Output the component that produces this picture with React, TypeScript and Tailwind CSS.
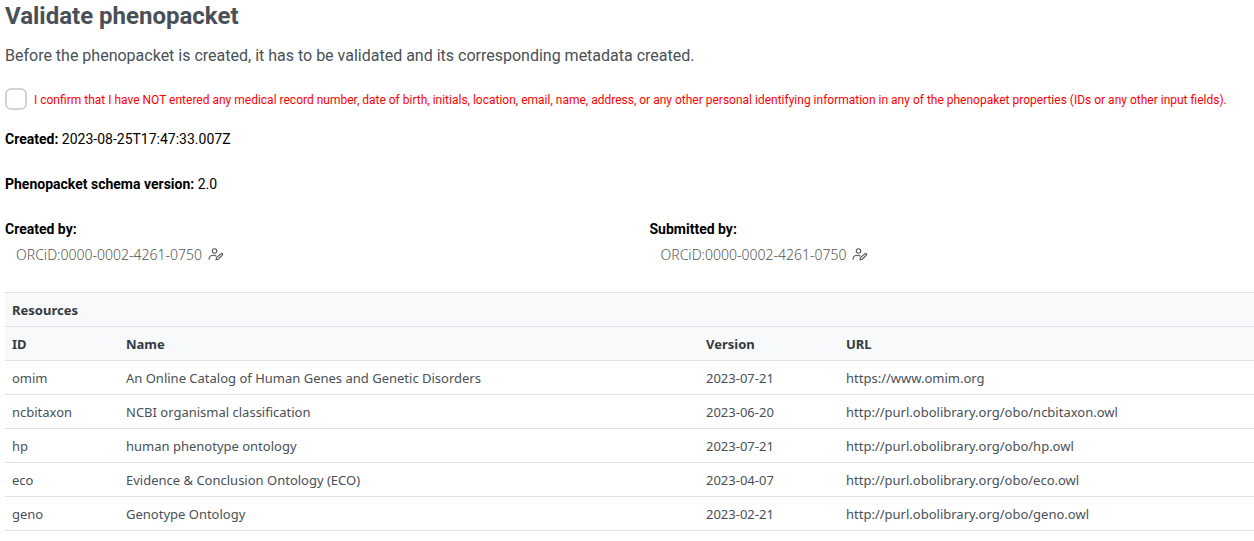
import React from "react";

const resources = [
  ["omim", "An Online Catalog of Human Genes and Genetic Disorders", "2023-07-21", "https://www.omim.org"],
  ["ncbitaxon", "NCBI organismal classification", "2023-06-20", "http://purl.obolibrary.org/obo/ncbitaxon.owl"],
  ["hp", "human phenotype ontology", "2023-07-21", "http://purl.obolibrary.org/obo/hp.owl"],
  ["eco", "Evidence & Conclusion Ontology (ECO)", "2023-04-07", "http://purl.obolibrary.org/obo/eco.owl"],
  ["geno", "Genotype Ontology", "2023-02-21", "http://purl.obolibrary.org/obo/geno.owl"],
];

function UserEditIcon() {
  return (
    <svg aria-hidden="true" className="h-4 w-4" viewBox="0 0 16 16" fill="none" stroke="currentColor" strokeWidth="1.1" strokeLinecap="round" strokeLinejoin="round">
      <circle cx="6.5" cy="4" r="2.2" />
      <path d="M1 12.2c.2-2.6 1.9-4 4.3-4 1.2 0 2.1.3 2.8.8" />
      <path d="M8 12.8l.5-2.2 4.6-4c.9-.7 2.1.5 1.3 1.4l-4.3 4.3z" />
    </svg>
  );
}

function Person({ title }: { title: string }) {
  return (
    <section>
      <h2 className="text-sm leading-5 font-bold">{title}</h2>
      <button type="button" className="mt-1 flex items-center gap-[6px] px-[11px] font-['Noto_Sans',sans-serif] text-sm leading-6 font-light text-[#555555]">
        <span>ORCiD:0000-0002-4261-0750</span>
        <UserEditIcon />
      </button>
    </section>
  );
}

export default function App() {
  return (
    <main className="bg-white pl-[5px] font-[Roboto,sans-serif] text-sm text-black">
      <h1 className="text-2xl leading-8 font-bold text-[#495057]">Validate phenopacket</h1>
      <p className="mt-3 text-base leading-6 text-[#495057]">
        Before the phenopacket is created, it has to be validated and its corresponding metadata created.
      </p>
      <div className="mt-5 flex items-center gap-[7px]">
        <input id="confirm" type="checkbox" className="h-[22px] w-[22px] shrink-0 appearance-none rounded-md border-2 border-[#ced4da] bg-white checked:bg-blue-500" />
        <label htmlFor="confirm" className="pt-px text-xs whitespace-nowrap text-[#ff0000]">
          I confirm that I have NOT entered any medical record number, date of birth, initials, location, email, name, address, or any other personal identifying information in any of the phenopaket properties (IDs or any other input fields).
        </label>
      </div>
      <p className="mt-[19px] leading-5"><b>Created:</b> 2023-08-25T17:47:33.007Z</p>
      <p className="mt-[25px] leading-5"><b>Phenopacket schema version:</b> 2.0</p>
      <div className="mt-[25px] grid grid-cols-2 gap-10">
        <Person title="Created by:" />
        <Person title="Submitted by:" />
      </div>
      <table className="mt-[25px] w-full table-fixed border-collapse text-left font-['Noto_Sans',sans-serif] text-[13px] leading-[19px] text-[#495057]">
        <colgroup>
          <col className="w-[114px]" />
          <col className="w-[580px]" />
          <col className="w-[140px]" />
          <col />
        </colgroup>
        <thead className="bg-[#f8f9fa] text-[#343a40]">
          <tr className="border-y border-[#dee2e6]"><th colSpan={4} className="px-[7px] pt-2 pb-1.5 font-bold">Resources</th></tr>
          <tr className="border-b border-[#dee2e6]">
            {["ID", "Name", "Version", "URL"].map((h) => <th key={h} scope="col" className="px-[7px] pt-2 pb-1.5 font-bold">{h}</th>)}
          </tr>
        </thead>
        <tbody>
          {resources.map((row) => (
            <tr key={row[0]} className="border-b border-[#dee2e6]">
              {row.map((cell) => <td key={cell} className="px-[7px] pt-2 pb-1.5">{cell}</td>)}
            </tr>
          ))}
        </tbody>
      </table>
    </main>
  );
}
